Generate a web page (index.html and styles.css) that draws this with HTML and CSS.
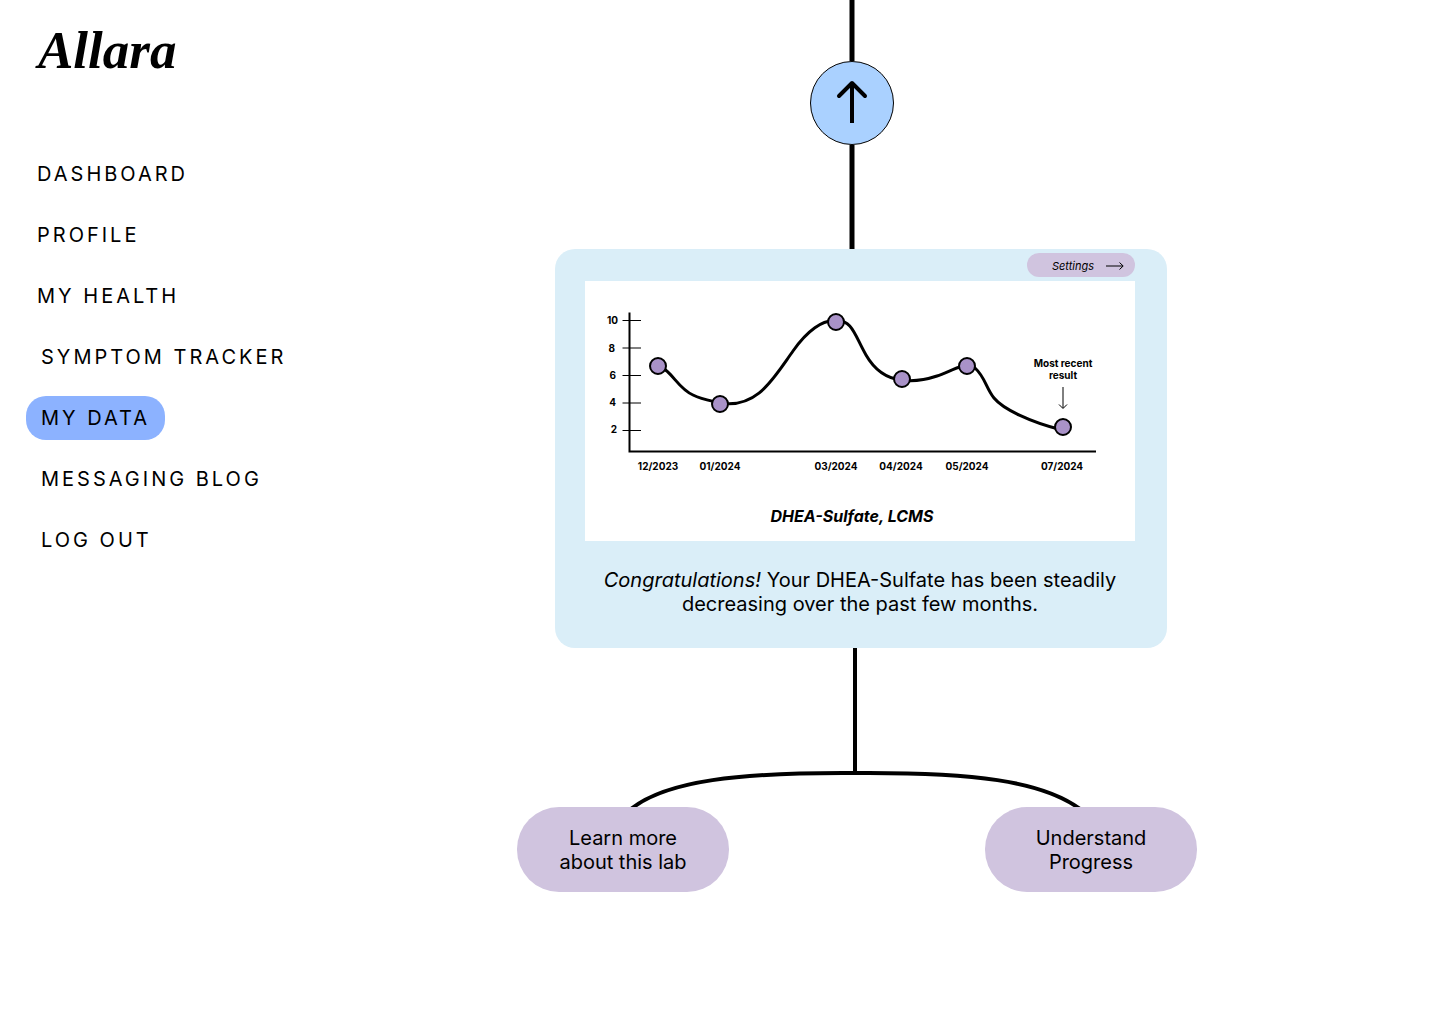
FILE: index.html
```html
<!DOCTYPE html>
<html lang="en">
<head>
  <meta charset="utf-8">
  <meta name="viewport" content="width=device-width, initial-scale=1">
  <title>Allara – My Data</title>
  <link rel="stylesheet" href="styles.css">
</head>
<body>
  <div class="page">
    <aside class="sidebar">
      <a class="logo" href="#">Allara</a>
      <nav class="nav" aria-label="Main">
        <a class="nav-link nav-link-primary" href="#">DASHBOARD</a>
        <a class="nav-link nav-link-primary" href="#">PROFILE</a>
        <a class="nav-link nav-link-primary" href="#">MY HEALTH</a>
        <a class="nav-link" href="#">SYMPTOM TRACKER</a>
        <a class="nav-link nav-link-active" href="#" aria-current="page">MY DATA</a>
        <a class="nav-link" href="#">MESSAGING BLOG</a>
        <a class="nav-link" href="#">LOG OUT</a>
      </nav>
    </aside>

    <main class="main">
      <div class="flow">
        <div class="previous">
          <svg class="line" width="6" height="61" viewBox="0 0 6 61" aria-hidden="true"><path d="M3 0V61" stroke="#000" stroke-width="5"/></svg>
          <button class="up-button" type="button" aria-label="Previous result">
            <svg width="36" height="48" viewBox="0 0 36 48" fill="none" stroke="#000" stroke-width="4" aria-hidden="true">
              <path d="M18 44V5"/>
              <path d="M5 17L18 4L31 17" stroke-linecap="round" stroke-linejoin="round"/>
            </svg>
          </button>
          <svg class="line" width="6" height="104" viewBox="0 0 6 104" aria-hidden="true"><path d="M3 0V104" stroke="#000" stroke-width="5"/></svg>
        </div>

        <section class="card">
          <button class="settings" type="button">
            Settings
            <svg width="18" height="8" viewBox="0 0 18 8" fill="none" stroke="#000" aria-hidden="true"><path d="M0 4H17M13.500 .5L17.200 4L13.500 7.500"/></svg>
          </button>
          <figure class="chart">
            <svg class="plot" viewBox="0 0 550 220" role="img" aria-label="DHEA-Sulfate results from 12/2023 to 07/2024">
              <path class="axis" d="M44.500 31.500V170.500H511"/>
              <path class="ticks" d="M37.500 39.500H56M37.500 67H56M37.500 94.500H56M37.500 122H56M37.500 149.500H56"/>
              <g class="label label-y">
                <text x="33" y="43">10</text>
                <text x="30" y="71">8</text>
                <text x="31" y="98">6</text>
                <text x="31" y="125">4</text>
                <text x="32" y="152">2</text>
              </g>
              <path class="curve" d="M73 85C87 89 92 107 108 114C118 119 128 120 135 122C172 128 188 98 208 70C222 50 238 38 251 40C267 38 270 55 281 74C289 88 300 97 316 99C330 101 343 98 352 95C365 91 380 80 390 87C400 96 401 107 409 117C418 128 445 141 477 149"/>
              <g class="points">
                <circle cx="73" cy="85" r="8"/>
                <circle cx="135" cy="123" r="8"/>
                <circle cx="251" cy="41" r="8"/>
                <circle cx="317" cy="98" r="8"/>
                <circle cx="382" cy="85" r="8"/>
                <circle cx="478" cy="146" r="8"/>
              </g>
              <g class="label">
                <text x="73" y="189">12/2023</text>
                <text x="135" y="189">01/2024</text>
                <text x="251" y="189">03/2024</text>
                <text x="316" y="189">04/2024</text>
                <text x="382" y="189">05/2024</text>
                <text x="477" y="189">07/2024</text>
                <text x="478" y="86">Most recent</text>
                <text x="478" y="98">result</text>
              </g>
              <path class="pointer" d="M478 106V127M474 123.500L478 127.500L482 123.500"/>
            </svg>
            <figcaption class="chart-title">DHEA-Sulfate, LCMS</figcaption>
          </figure>
          <p class="message"><em>Congratulations!</em> Your DHEA-Sulfate has been steadily decreasing over the past few months.</p>
        </section>

        <svg class="branches" viewBox="0 0 680 159" fill="none" stroke="#000" stroke-width="4" aria-hidden="true">
          <path d="M338 0V126"/>
          <path d="M114 161C150 132 225 125 325 125H352C452 125 524 132 563 161"/>
        </svg>

        <div class="actions">
          <button class="action" type="button">Learn more<br>about this lab</button>
          <button class="action" type="button">Understand<br>Progress</button>
        </div>
      </div>
    </main>
  </div>
</body>
</html>
```
FILE: styles.css
```css
* {
  box-sizing: border-box;
}

body {
  margin: 0;
  background: #fff;
  color: #000;
  font-family: Inter, "Liberation Sans", sans-serif;
  font-optical-sizing: none;
}

button {
  border: 0;
  padding: 0;
  color: inherit;
  font-family: inherit;
  cursor: pointer;
}

.page {
  display: grid;
  grid-template-columns: 300px 1fr;
  min-height: 100vh;
}

/* Sidebar */
.sidebar {
  padding: 20px 0 0 26px;
}

.logo {
  display: block;
  padding-left: 12px;
  color: inherit;
  font: italic 700 53px/60px "Liberation Serif", serif;
  text-decoration: none;
}

.nav {
  display: flex;
  flex-direction: column;
  align-items: flex-start;
  gap: 17px;
  margin-top: 72px;
}

.nav-link {
  padding: 1px 15px 0;
  border-radius: 20px;
  color: inherit;
  font-size: 20px;
  line-height: 43px;
  letter-spacing: 3px;
  text-decoration: none;
  white-space: nowrap;
}

.nav-link-primary {
  padding-left: 11px;
}

.nav-link-active {
  background: #8cb2ff;
}

/* Result flow */
.main {
  display: flex;
  justify-content: center;
  padding-right: 26px;
}

.flow {
  width: 680px;
}

.previous {
  display: flex;
  flex-direction: column;
  align-items: center;
  padding-right: 10px;
}

.line {
  display: block;
}

.up-button {
  display: flex;
  align-items: center;
  justify-content: center;
  width: 84px;
  height: 84px;
  border: 1px solid #000;
  border-radius: 50%;
  background: #aad1ff;
}

.card {
  display: flex;
  flex-direction: column;
  gap: 4px;
  margin: 0 30px 0 38px;
  padding: 4px 32px 32px 30px;
  border-radius: 20px;
  background: #daeef8;
}

.settings {
  display: flex;
  align-items: center;
  align-self: flex-end;
  justify-content: flex-end;
  gap: 12px;
  width: 108px;
  height: 24px;
  padding: 2px 11px 0 0;
  border-radius: 12px;
  background: #d0c4df;
  font-size: 11px;
  font-style: italic;
}

.chart {
  margin: 0;
  padding-bottom: 10px;
  background: #fff;
}

.plot {
  display: block;
  width: 100%;
}

.axis {
  fill: none;
  stroke: #000;
  stroke-width: 2;
}

.ticks,
.pointer {
  fill: none;
  stroke: #000;
}

.curve {
  fill: none;
  stroke: #000;
  stroke-width: 3;
}

.points {
  fill: #a992c8;
  stroke: #000;
  stroke-width: 2;
}

.label {
  font-size: 10px;
  font-weight: 700;
  text-anchor: middle;
}

.label-y {
  text-anchor: end;
}

.chart-title {
  padding-right: 16px;
  font-size: 16px;
  font-style: italic;
  font-weight: 700;
  line-height: 30px;
  text-align: center;
}

.message {
  margin: 23px 0 0;
  font-size: 20px;
  line-height: 24px;
  text-align: center;
}

.branches {
  display: block;
  width: 100%;
}

.actions {
  display: flex;
  justify-content: space-between;
}

.action {
  width: 212px;
  padding: 19px 0 18px;
  border-radius: 42px;
  background: #d0c4df;
  font-size: 20px;
  line-height: 24px;
}
```
